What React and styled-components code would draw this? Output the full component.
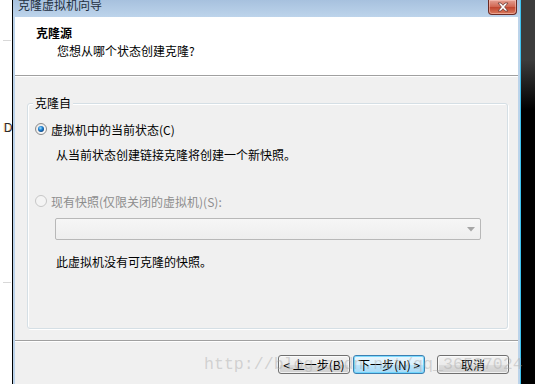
import styled, { createGlobalStyle } from "styled-components";

const GlobalStyle = createGlobalStyle`
  html, body { margin: 0; padding: 0; background: #fff; }
  body { font-family: "Noto Sans CJK SC", "Liberation Sans", sans-serif; }
`;

export default function App() {
  return (
    <>
      <GlobalStyle />
      <Screen>
        <Backdrop>
          <Tick $top={40} />
          <Fragment>D</Fragment>
          <Tick $top={147} />
        </Backdrop>

        <Window>
          <TitleBar>
            <TitleText>克隆虚拟机向导</TitleText>
            <CloseButton>
              <svg width="16" height="10" viewBox="0 0 16 10">
                <path
                  d="M3 1 L6 1 L8 3.3 L10 1 L13 1 L9.6 5 L13 9 L10 9 L8 6.7 L6 9 L3 9 L6.4 5 Z"
                  fill="#fff"
                  stroke="#6b3a35"
                  strokeWidth="0.8"
                />
              </svg>
            </CloseButton>
          </TitleBar>

          <Client>
            <Header>
              <HeaderTitle>克隆源</HeaderTitle>
              <HeaderSub>您想从哪个状态创建克隆?</HeaderSub>
            </Header>

            <Content>
              <GroupBox>
                <Legend>克隆自</Legend>
                <RadioRow>
                  <Radio checked />
                  <span>虚拟机中的当前状态(C)</span>
                </RadioRow>
                <Hint $top={10}>从当前状态创建链接克隆将创建一个新快照。</Hint>

                <RadioRow $top={30} $disabled>
                  <Radio disabled />
                  <span>现有快照(仅限关闭的虚拟机)(S):</span>
                </RadioRow>
                <Combo>
                  <svg width="8" height="5" viewBox="0 0 8 5">
                    <path d="M0 0 H8 L4 4.5 Z" fill="#a6a6a6" />
                  </svg>
                </Combo>
                <Hint $top={14}>此虚拟机没有可克隆的快照。</Hint>
              </GroupBox>
            </Content>

            <Footer>
              <Button>&lt; 上一步(B)</Button>
              <Button $primary>下一步(N) &gt;</Button>
              <Button $gap={12}>取消</Button>
            </Footer>
          </Client>
        </Window>

        <Edge />
        <Watermark>http://blog.csdn.net/qq_36597024</Watermark>
      </Screen>
    </>
  );
}

function Radio({ checked, disabled }) {
  return (
    <svg width="12" height="12" viewBox="0 0 12 12">
      <defs>
        <radialGradient id="dot" cx="40%" cy="35%" r="70%">
          <stop offset="0" stopColor="#9ce0ff" />
          <stop offset="0.5" stopColor="#1d7fd0" />
          <stop offset="1" stopColor="#0d3f7a" />
        </radialGradient>
        <linearGradient id="ring" x1="0" y1="0" x2="1" y2="1">
          <stop offset="0" stopColor="#e6e6e6" />
          <stop offset="1" stopColor="#ffffff" />
        </linearGradient>
      </defs>
      <circle
        cx="6"
        cy="6"
        r="5.5"
        fill={disabled ? "#f4f4f4" : "url(#ring)"}
        stroke={disabled ? "#c6c6c6" : "#8a8a8a"}
      />
      {checked && <circle cx="6" cy="6" r="3" fill="url(#dot)" />}
    </svg>
  );
}

const Screen = styled.div`
  position: relative;
  width: 535px;
  height: 384px;
  display: flex;
  overflow: hidden;
  background: #fff;
  font-size: 12px;
  color: #000;
`;

const Backdrop = styled.div`
  width: 12px;
  display: flex;
  flex-direction: column;
`;

const Tick = styled.div`
  margin: ${(p) => p.$top}px 1px 0 3px;
  height: 1px;
  background: #d8d8d8;
`;

const Fragment = styled.div`
  margin: 80px 0 0 4px;
  height: 14px;
  line-height: 14px;
  font-family: "Liberation Sans", sans-serif;
  font-size: 12px;
  color: #2a2a2a;
  text-shadow: -1px 0 0 rgba(230, 150, 40, 0.5);
`;

const Window = styled.div`
  width: 507px;
  display: flex;
  flex-direction: column;
  border-left: 1px solid #000;
  border-right: 1px solid #3ec3f0;
  background: #bcd3ea;
`;

const TitleBar = styled.div`
  height: 17px;
  display: flex;
  align-items: flex-start;
  justify-content: space-between;
  padding: 0 3px 0 5px;
  background: linear-gradient(#a7c1de, #bdd4eb);
`;

const TitleText = styled.div`
  margin-top: -3px;
  line-height: 15px;
  font-size: 12px;
  color: #1f2f40;
`;

const CloseButton = styled.div`
  width: 29px;
  height: 15px;
  box-sizing: border-box;
  display: flex;
  align-items: center;
  justify-content: center;
  border: 1px solid #6a2a24;
  border-top: none;
  border-radius: 0 0 4px 4px;
  background: linear-gradient(#e4a093, #d0644f 50%, #c0452f 51%, #d97a5e);
  box-shadow: inset 0 0 0 1px rgba(255, 210, 200, 0.5);
`;

const Client = styled.div`
  flex: 1;
  display: flex;
  flex-direction: column;
  margin: 0 2px 0 2px;
  background: #f0f0f0;
`;

const Header = styled.div`
  height: 59px;
  box-sizing: border-box;
  padding: 8px 0 0 21px;
  background: #fff;
  border-bottom: 1px solid #a0a0a0;
`;

const HeaderTitle = styled.div`
  line-height: 16px;
  font-weight: bold;
`;

const HeaderSub = styled.div`
  margin: 2px 0 0 21px;
  line-height: 16px;
`;

const Content = styled.div`
  height: 265px;
  box-sizing: border-box;
  padding: 26px 10px 0 12px;
  border-top: 1px solid #fff;
  border-bottom: 1px solid #a0a0a0;
`;

const GroupBox = styled.div`
  position: relative;
  height: 226px;
  box-sizing: border-box;
  padding: 17px 7px 0 7px;
  border: 1px solid #d5dfe5;
  border-radius: 3px;
  box-shadow: inset 1px 1px 0 #fff, 1px 1px 0 #fff;
`;

const Legend = styled.div`
  position: absolute;
  top: -9px;
  left: 5px;
  padding: 0 2px;
  line-height: 16px;
  background: #f0f0f0;
`;

const RadioRow = styled.div`
  display: flex;
  align-items: center;
  gap: 4px;
  height: 16px;
  margin-top: ${(p) => p.$top || 0}px;
  color: ${(p) => (p.$disabled ? "#8d8d8d" : "#000")};
`;

const Hint = styled.div`
  margin: ${(p) => p.$top}px 0 0 21px;
  line-height: 16px;
`;

const Combo = styled.div`
  width: 426px;
  height: 22px;
  box-sizing: border-box;
  margin: 9px 0 0 20px;
  display: flex;
  align-items: center;
  justify-content: flex-end;
  padding-right: 5px;
  border: 1px solid #b8b8b8;
  border-radius: 2px;
  background: linear-gradient(#f6f6f6, #eeeeee);
`;

const Footer = styled.div`
  flex: 1;
  display: flex;
  align-items: flex-start;
  justify-content: flex-end;
  padding: 13px 9px 0 0;
  border-top: 1px solid #fff;
`;

const Button = styled.div`
  width: 72px;
  height: 19px;
  box-sizing: border-box;
  margin-left: ${(p) => (p.$gap ? p.$gap : 3)}px;
  display: flex;
  align-items: center;
  justify-content: center;
  line-height: 16px;
  border: 1px solid ${(p) => (p.$primary ? "#3c7fb1" : "#707070")};
  border-radius: 3px;
  background: ${(p) =>
    p.$primary
      ? "linear-gradient(#eaf6fd, #d9f0fc 50%, #bee6fd 51%, #a7d9f5)"
      : "linear-gradient(#f2f2f2, #ebebeb 50%, #dddddd 51%, #cfcfcf)"};
  box-shadow: inset 0 0 0 1px
    ${(p) => (p.$primary ? "rgba(98, 212, 255, 0.8)" : "rgba(255, 255, 255, 0.7)")};
`;

const Edge = styled.div`
  flex: 1;
  background: linear-gradient(#3c3c3c 0, #3c3c3c 60px, #000 110px);
`;

const Watermark = styled.div`
  position: absolute;
  left: 204px;
  top: 355px;
  font-family: "Liberation Mono", monospace;
  font-size: 16.6px;
  line-height: 20px;
  color: rgba(170, 170, 170, 0.45);
  white-space: nowrap;
  pointer-events: none;
`;
